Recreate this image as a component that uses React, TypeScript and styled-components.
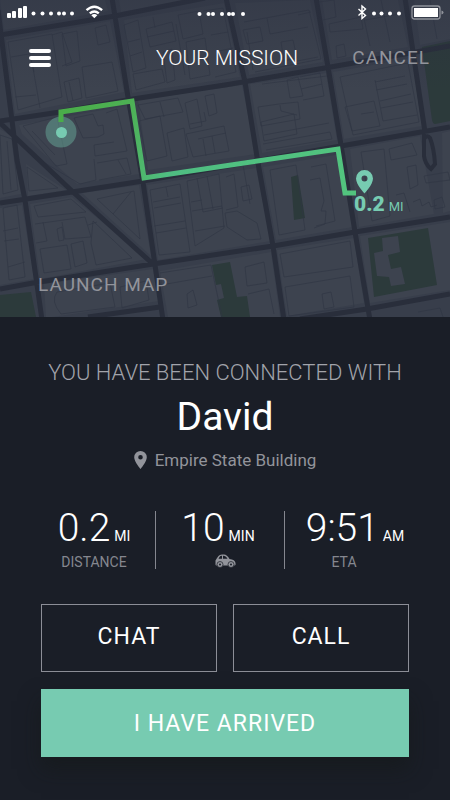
import React from "react";
import styled, { createGlobalStyle } from "styled-components";

const GlobalStyle = createGlobalStyle`
  *, *::before, *::after { box-sizing: border-box; }
  html, body { margin: 0; background: #1a1e27; }
  body { font-family: Roboto, "Liberation Sans", sans-serif; color: #fff; }
  button { font: inherit; color: inherit; }
`;

const Screen = styled.main`
  display: flex;
  flex-direction: column;
  min-height: 100vh;
  background: #1a1e27;
`;

const Hero = styled.section`
  position: relative;
  display: flex;
  flex-direction: column;
  overflow: hidden;
  background: #383e4b;
`;

const MapLayer = styled.svg`
  position: absolute;
  inset: 0;
  width: 100%;
  height: 100%;
`;

const StatusBar = styled.div`
  position: relative;
  display: grid;
  grid-template-columns: 1fr auto 1fr;
  align-items: center;
  height: 24px;
  padding: 0 6px;
  svg { display: block; }
  svg:last-child { justify-self: end; }
`;

const NavBar = styled.header`
  position: relative;
  display: grid;
  grid-template-columns: 1fr auto 1fr;
  align-items: center;
  height: 68px;
  padding: 0 20px 0 24px;
`;

const MenuButton = styled.button`
  display: flex;
  flex-direction: column;
  justify-content: space-between;
  width: 27px;
  height: 18px;
  padding: 0 0 0 5px;
  border: 0;
  background: none;
  cursor: pointer;
`;

const MenuBar = styled.span`
  width: 100%;
  height: 4px;
  border-radius: 2px;
  background: #fff;
`;

const Title = styled.h1`
  margin: 0;
  font-size: 21px;
  line-height: 24px;
  font-weight: 300;
`;

const TextButton = styled.button<{ $end?: boolean }>`
  justify-self: ${(p) => (p.$end ? "end" : "start")};
  padding: 0;
  border: 0;
  background: none;
  color: #92949b;
  font-size: 19px;
  line-height: 24px;
  letter-spacing: 1px;
  cursor: pointer;
`;

const MapFooter = styled.div`
  position: relative;
  display: flex;
  padding: 181px 38px 20px;
`;

const Panel = styled.section`
  display: flex;
  flex-direction: column;
  padding: 42px 41px 43px;
`;

const Lead = styled.h2`
  margin: 0;
  color: #a2a4ab;
  font-size: 22px;
  line-height: 28px;
  font-weight: 300;
  text-align: center;
  white-space: nowrap;
`;

const PersonName = styled.p`
  margin: 6px 0 0;
  font-size: 39px;
  line-height: 48px;
  text-align: center;
`;

const Place = styled.p`
  display: flex;
  align-items: center;
  justify-content: center;
  gap: 8px;
  margin: 7px 0 0;
  color: #92949b;
  font-size: 17px;
  line-height: 24px;
`;

const Stats = styled.div`
  display: grid;
  grid-template-columns: 114fr 129fr 125fr;
  margin-top: 39px;
`;

const Stat = styled.div<{ $pad?: string }>`
  display: flex;
  flex-direction: column;
  align-items: center;
  height: 58px;
  padding: ${(p) => p.$pad || "0"};
  & + & { border-left: 1px solid #85878f; }
`;

const Figure = styled.p`
  display: flex;
  align-items: baseline;
  gap: 4px;
  height: 34px;
  margin: 0;
  font-size: 39px;
  line-height: 34px;
  font-weight: 300;
  white-space: nowrap;
`;

const Unit = styled.span`
  font-size: 14px;
  line-height: 18px;
  font-weight: 400;
`;

const Caption = styled.p<{ $pad?: string }>`
  display: flex;
  align-items: center;
  height: 18px;
  margin: 8px 0 0;
  padding: ${(p) => p.$pad || "0"};
  color: #85878f;
  font-size: 14px;
  line-height: 18px;
`;

const Actions = styled.div`
  display: grid;
  grid-template-columns: 1fr 1fr;
  gap: 17px 16px;
  margin-top: 35px;
`;

const ActionButton = styled.button<{ $primary?: boolean }>`
  grid-column: ${(p) => (p.$primary ? "1 / -1" : "auto")};
  height: 68px;
  padding: ${(p) => (p.$primary ? "2px 0 0" : "0 0 2px")};
  border: ${(p) => (p.$primary ? "0" : "1px solid #8c8e97")};
  background: ${(p) => (p.$primary ? "#77cbb1" : "transparent")};
  box-shadow: ${(p) => (p.$primary ? "0 12px 20px rgba(20, 24, 22, 0.5)" : "none")};
  color: #fff;
  font-size: 23px;
  line-height: 28px;
  letter-spacing: 1px;
  cursor: pointer;
`;

const PinLabel = styled.text`
  fill: #77cbb1;
  font-size: 21px;
  font-weight: 900;
`;

const PinUnit = styled.tspan`
  font-size: 13px;
  font-weight: 400;
`;

const BLOCKS =
  "M6 40L110 21L124 92L15 114Z M0 0H105L108 11L4 30Z M124 20L224 3L240 77L132 93Z M119 0H190L121 12Z M235 3L310 0L323 62L249 75Z M322 0H398L408 47L332 60Z M414 0H450V39L420 45Z M19 125L130 105L139 174L77 184L22 134Z M138 100L242 85L256 154L148 170Z M250 84L326 73L337 140L262 153Z M333 72L412 58L422 126L344 139Z M0 129L13 137L21 194L0 198Z M26 164L66 190L28 196Z M0 208L22 205L34 279L0 285Z M30 204L72 197L147 259L40 279Z M82 193L139 185L151 256Z M147 185L256 168L271 241L158 260Z M263 167L341 154L353 227L276 240Z M350 149L420 136L434 214L359 227Z M442 133L450 131V211L443 213Z M44 284L153 269L159 301L46 318Z M160 271L271 252L280 317H168Z M277 250L354 238L364 303L287 316Z M360 236L450 222V290L370 303Z";

const BUILDINGS =
  "M8 42L52 34L62 97L18 110Z M33 68L40 108 M11 57L35 53 M52 35L62 32L72 62L62 66 M62 34L77 31L80 61L66 66Z M95 28L106 25L110 42L98 45Z M82 67L112 62L118 91L86 98Z M64 82L79 78L82 98L68 102Z M69 82L73 101 M15 97L36 95 M30 55L34 72" +
  " M124 25L138 20L146 68L133 72Z M128 42L140 39 M130 56L142 52 M146 29L172 22L176 41L150 47Z M147 37L174 31 M153 17L155 28 M133 74L162 69L165 82L136 90Z M163 52L172 49L175 80L167 83Z M178 15L199 11L203 34L183 39Z M176 24L185 75 M186 42L205 38L210 75L190 79Z M203 11L223 8L236 72L215 77 M211 35L228 32 M219 51L233 48" +
  " M243 30L260 27L263 41L247 44Z M244 22L309 10L321 59L255 72 M267 18L270 34L308 27 M247 32L253 70 M281 42L293 40L297 58L284 61Z M298 15L311 12 M297 61L318 57 M329 24L361 17L363 29L330 32Z M336 46L344 44L346 56L337 58Z M360 0L370 46 M365 20L400 14 M381 0L390 42 M318 2L334 0L336 17L323 20 M430 0L437 39 M417 9L429 6" +
  " M23 126L57 117L67 164L56 166Z M32 131L55 155 M74 118L93 114L98 126L103 125L104 134L98 137L83 138Z M106 113L117 109L127 151L95 156L94 145L114 142 M118 160L126 174" +
  " M138 105L178 98L183 112L145 119Z M139 121L160 116L167 156L147 161Z M160 102L164 117 M185 103L197 99L202 126L190 129Z M190 124L206 121L204 112 M205 96L214 94L217 113L209 116Z M186 134L224 126L229 151L193 157Z M198 139L226 133 M203 139L206 156 M212 136L215 153 M167 133L184 128L188 157L172 161Z" +
  " M287 80L298 77L303 96L290 98Z M300 77L320 73L324 96L303 100 M301 89L322 84 M258 107L279 104L298 102L300 119L261 126Z M280 105L281 111L297 115 M261 122L294 114L297 134L264 141Z M264 135L329 123 M263 144L330 132L332 139L266 150 M262 84L327 76" +
  " M340 77L408 63L419 122L353 135Z M375 82L405 76 M376 90L407 84 M375 80L383 121L417 115 M380 101L411 94 M381 108L413 102 M345 107L374 101L380 126L352 131Z M361 114L374 112 M389 149L412 143L417 155L391 160Z M361 152L384 149L390 216L372 221Z" +
  " M27 167L29 191L58 188Z M40 160L80 184L96 180L94 159 M97 163L127 158L131 174L99 180 M0 135L12 139L18 190L3 194Z M7 141L11 190 M3 208L17 205L25 277L9 280Z M3 231L18 228 M4 241L19 239 M8 267L25 262" +
  " M34 206L71 199L86 212L38 217Z M35 224L85 217L91 237L65 239L62 222 M43 222L47 241L36 243 M57 229L62 227L64 240L59 241Z M40 249L67 245L71 269L44 273Z M71 244L83 241L87 263L75 267Z M93 221L132 258L96 265L91 243Z M97 199L134 191L140 239Z M131 192L113 214 M88 225L97 222" +
  " M150 190L180 184L190 252L159 255Z M166 187L168 197 M153 202L180 197 M154 208L181 203 M154 226L185 221 M156 233L186 228 M187 181L219 174L224 228L195 246Z M197 178L203 212L223 208 M207 176L213 209 M191 202L202 200 M192 211L222 206 M195 231L225 226" +
  " M226 177L234 174L238 207L226 210 M225 213L237 211L257 223L261 239L247 240L227 227Z M243 165L250 204 M241 187L249 185L252 199L243 201Z M270 170L296 165L305 230L279 235Z M310 180L320 178L324 201L321 211L326 211L325 224L314 228 M311 167L326 164L335 221L316 226" +
  " M407 167L416 165L418 185L410 189Z M424 176L448 172L450 180L426 183Z M396 195L404 193L410 212 M413 202L420 199L422 206L429 202L431 207L437 205 M434 200L442 197L445 207L435 209Z" +
  " M57 292L110 283L115 307L61 314Q50 301 57 292Z M120 287L146 281L149 300L122 308Z M160 273L211 265L222 317 M161 285L212 276 M187 294L193 290L197 305L188 308Z M280 254L350 241L353 267L284 277Z M285 287L350 276L354 307L289 316Z M245 267L264 262L267 283L247 286Z M248 294L269 289L274 314 M322 294L331 292L334 307L324 309Z M418 312L440 308L443 317";

const ROADS =
  "M0 35L115 16L205 -2 M0 121L60 112L133 99L225 85L325 68L450 46 M0 203L72 192L143 181L341 146L450 127 M0 289L33 283L153 264L273 246L355 232L450 217 M88 317L160 307 M300 319L367 309L450 294 M-2 10L17 160L25 200L42 320 M112 -2L128 97L143 182L155 265L163 320 M226 -2L245 82L258 163L273 246L284 320 M316 -2L328 67L341 145L355 232L370 320 M405 -2L425 132 M-2 121L37 158L73 192L154 265";

function CityMap() {
  return (
    <MapLayer viewBox="0 0 450 317" preserveAspectRatio="xMidYMid slice" role="img" aria-label="Route map">
      <defs>
        <linearGradient id="route" x1="60" y1="110" x2="350" y2="190" gradientUnits="userSpaceOnUse">
          <stop offset="0" stopColor="#4aad49" />
          <stop offset="0.22" stopColor="#4db054" />
          <stop offset="0.4" stopColor="#4fbd82" />
          <stop offset="1" stopColor="#52c47e" />
        </linearGradient>
        <linearGradient id="shade" x1="0" y1="0" x2="0" y2="1">
          <stop offset="0" stopColor="#2b3040" stopOpacity="0.4" />
          <stop offset="1" stopColor="#2b3040" stopOpacity="0" />
        </linearGradient>
      </defs>
      <rect width="450" height="317" fill="#383e4b" />
      <path d={BLOCKS} fill="#3d434f" />
      <path
        fill="#2c3a3b"
        d="M422 47L450 41V121L435 124Q433 124 432 120Z M0 295L31 292L36 317H0Z M212 265L230 262L237 297L247 296L250 317H221L217 300L224 298L221 284L216 285Z M291 177L298 175L305 218L294 220Z"
      />
      <path
        fill="#2c3a3b"
        fillRule="evenodd"
        d="M368 238L428 228L437 285L374 297Z M382 238L398 236L400 252L388 255L391 269L401 267L405 284L391 286L389 277L377 276L374 253L383 251Z"
      />
      <path d={BUILDINGS} fill="none" stroke="#303643" strokeWidth="1" opacity="0.65" />
      <path d={ROADS} fill="none" stroke="#292e3b" strokeWidth="5" strokeLinejoin="round" />
      <path
        d="M424 134V156Q425 164 431 169L435 164Q434 148 430 138Q427 134 424 139"
        fill="none"
        stroke="#292e3b"
        strokeWidth="4"
      />
      <rect width="450" height="90" fill="url(#shade)" />
      <circle cx="61" cy="132" r="15.500" fill="#77cbb1" opacity="0.38" />
      <path d="M61 122V112L132 101L144 178L338 149L345 193H356" fill="none" stroke="url(#route)" strokeWidth="5" />
      <circle cx="61.500" cy="132.500" r="5.500" fill="#77cbb1" />
      <path
        d="M364.500 170a8.500 8.500 0 0 0-8.500 8.500c0 6 8.500 15 8.500 15s8.500-9 8.500-15a8.500 8.500 0 0 0-8.500-8.500Zm0 5.500a3 3 0 1 1 0 6 3 3 0 0 1 0-6Z"
        fill="#77cbb1"
      />
      <PinLabel x="354" y="211">
        0.2
        <PinUnit dx="4">MI</PinUnit>
      </PinLabel>
    </MapLayer>
  );
}

function SignalIcons() {
  return (
    <svg width="100" height="22" viewBox="6 1 100 22" fill="#fff" aria-hidden="true">
      <rect x="7" y="13" width="4" height="5" rx="1" />
      <rect x="12" y="11" width="4" height="7" rx="1" />
      <rect x="18" y="8" width="4" height="10" rx="1" />
      <rect x="23" y="6" width="4" height="12" rx="1" />
      {[33.5, 42.5, 51, 59, 64, 72].map((x) => (
        <circle key={x} cx={x} cy="13.500" r="2" />
      ))}
      <g fill="none" stroke="#fff" strokeWidth="2.300">
        <path d="M86.500 10.200Q94.300 3.300 102.100 10.200" />
        <path d="M89.800 13.400Q94.300 9.500 98.800 13.400" />
      </g>
      <path d="M91.300 15.200Q94.300 12.700 97.300 15.200L94.300 18.200Z" />
    </svg>
  );
}

function CenterDots() {
  return (
    <svg width="56" height="22" viewBox="197 1 56 22" fill="#fff" aria-hidden="true">
      {[199.5, 208.5, 213, 222, 229, 233, 243].map((x) => (
        <circle key={x} cx={x} cy="14" r="2" />
      ))}
    </svg>
  );
}

function PowerIcons() {
  return (
    <svg width="88" height="22" viewBox="356 1 88 22" fill="#fff" aria-hidden="true">
      <path
        d="M358.500 9L365.500 15.500L362 18.500V6L365.500 9L358.500 15.500"
        fill="none"
        stroke="#fff"
        strokeWidth="1.400"
      />
      {[374, 381.5, 390, 399].map((x) => (
        <circle key={x} cx={x} cy="13.500" r="2" />
      ))}
      <rect x="412" y="6" width="28" height="13" rx="2.500" fill="none" stroke="#8f929a" strokeWidth="1.300" />
      <rect x="414" y="8" width="24" height="9" />
      <path d="M441.500 10.500q2 .5 2 2t-2 2Z" fill="#8f929a" />
    </svg>
  );
}

function PlaceIcon() {
  return (
    <svg width="13" height="18" viewBox="0 0 13 18" fill="#92949b" aria-hidden="true">
      <path d="M6.500 0A6.300 6.300 0 0 0 .2 6.300C.2 11 6.500 18 6.500 18s6.300-7 6.300-11.700A6.300 6.300 0 0 0 6.500 0Zm0 4a2.300 2.300 0 1 1 0 4.600 2.300 2.300 0 0 1 0-4.600Z" />
    </svg>
  );
}

function CarIcon() {
  return (
    <svg width="21" height="14" viewBox="0 0 21 14" role="img" aria-label="By car">
      <path
        fill="#92949b"
        fillRule="evenodd"
        d="M.5 10.500V6.500Q1.500 4.500 3.500 2Q4.500.5 7 .5H9Q12 .5 14.500 5Q20 5.500 20.500 9Q21 11.500 19.500 11.500H1.500Q.5 11.500.5 10.500ZM3.500 4.700H7V1.700Q5 1.700 4.500 3ZM8 4.700H12.500Q11 1.700 8 1.700Z"
      />
      <g fill="#92949b" stroke="#1a1e27" strokeWidth="0.700">
        <circle cx="5" cy="10.500" r="3" />
        <circle cx="16" cy="10.500" r="3" />
      </g>
      <circle cx="5" cy="10.500" r="1" fill="#1a1e27" />
      <circle cx="16" cy="10.500" r="1" fill="#1a1e27" />
    </svg>
  );
}

export default function App() {
  return (
    <>
      <GlobalStyle />
      <Screen>
        <Hero>
          <CityMap />
          <StatusBar>
            <SignalIcons />
            <CenterDots />
            <PowerIcons />
          </StatusBar>
          <NavBar>
            <MenuButton type="button" aria-label="Menu">
              <MenuBar />
              <MenuBar />
              <MenuBar />
            </MenuButton>
            <Title>YOUR MISSION</Title>
            <TextButton type="button" $end>
              CANCEL
            </TextButton>
          </NavBar>
          <MapFooter>
            <TextButton type="button">LAUNCH MAP</TextButton>
          </MapFooter>
        </Hero>
        <Panel>
          <Lead>YOU HAVE BEEN CONNECTED WITH</Lead>
          <PersonName>David</PersonName>
          <Place>
            <PlaceIcon />
            Empire State Building
          </Place>
          <Stats>
            <Stat $pad="0 8px 0 0">
              <Figure>
                0.2<Unit>MI</Unit>
              </Figure>
              <Caption>DISTANCE</Caption>
            </Stat>
            <Stat $pad="0 4px 0 0">
              <Figure>
                10<Unit>MIN</Unit>
              </Figure>
              <Caption $pad="0 0 0 14px">
                <CarIcon />
              </Caption>
            </Stat>
            <Stat $pad="0 0 0 16px">
              <Figure>
                9:51<Unit>AM</Unit>
              </Figure>
              <Caption $pad="0 22px 0 0">ETA</Caption>
            </Stat>
          </Stats>
          <Actions>
            <ActionButton type="button">CHAT</ActionButton>
            <ActionButton type="button">CALL</ActionButton>
            <ActionButton type="button" $primary>
              I HAVE ARRIVED
            </ActionButton>
          </Actions>
        </Panel>
      </Screen>
    </>
  );
}
